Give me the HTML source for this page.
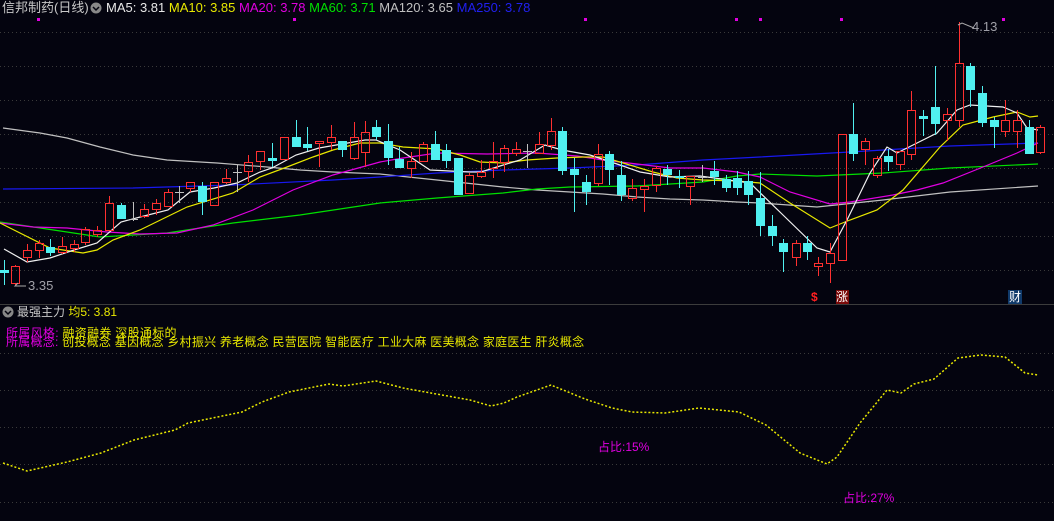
<!DOCTYPE html>
<html><head><meta charset="utf-8">
<style>
html,body{margin:0;padding:0;background:#04040f;width:1054px;height:521px;overflow:hidden;font-family:"Liberation Sans","Noto Sans CJK SC",sans-serif;}
#w{position:relative;width:1054px;height:521px;}
svg{position:absolute;left:0;top:0;}
.t{position:absolute;white-space:nowrap;font-size:12px;line-height:14px;}
</style></head><body><div id="w">
<svg id="s" width="1054" height="521" xmlns="http://www.w3.org/2000/svg">
<g stroke="#3a3a3a" stroke-dasharray="1,3" stroke-width="1">
<line x1="0" y1="32.5" x2="1054" y2="32.5"/><line x1="0" y1="66.5" x2="1054" y2="66.5"/><line x1="0" y1="100.5" x2="1054" y2="100.5"/><line x1="0" y1="134.5" x2="1054" y2="134.5"/><line x1="0" y1="168.5" x2="1054" y2="168.5"/><line x1="0" y1="202.5" x2="1054" y2="202.5"/><line x1="0" y1="236.5" x2="1054" y2="236.5"/><line x1="0" y1="270.5" x2="1054" y2="270.5"/>
<line x1="0" y1="353.5" x2="1054" y2="353.5"/><line x1="0" y1="390.5" x2="1054" y2="390.5"/><line x1="0" y1="427.5" x2="1054" y2="427.5"/><line x1="0" y1="464.5" x2="1054" y2="464.5"/><line x1="0" y1="502.5" x2="1054" y2="502.5"/>
</g>
<line x1="0" y1="304.5" x2="1054" y2="304.5" stroke="#3c3c3c"/>
<g fill="#e000e0"><rect x="37" y="18" width="3" height="3"/><rect x="293" y="18" width="3" height="3"/><rect x="584" y="18" width="3" height="3"/><rect x="735" y="18" width="3" height="3"/><rect x="759" y="18" width="3" height="3"/><rect x="840" y="18" width="3" height="3"/><rect x="1002" y="18" width="3" height="3"/></g>
<g id="ma" fill="none" stroke-width="1.2"></g>
<g id="cd"></g>
<polyline fill="none" stroke="#e8e800" stroke-width="1.5" stroke-dasharray="2,2" points="3,463 27,471 67,462 101,453 134,440 175,430 188,423 242,412 262,402 289,392 329,384 343,386 376,381 403,388 470,400 491,406 504,403 517,397 551,385 585,399 612,408 632,412 665,413 699,408 739,412 766,425 800,453 827,464 837,457 860,423 887,390 901,393 914,384 934,379 958,358 981,355 1005,357 1025,373 1038,375"/>
<polyline fill="none" stroke="#aaa" points="974,28 962,23 958,25"/>
<polyline fill="none" stroke="#aaa" points="26,286 15,286 18,283"/>
<circle cx="96" cy="8" r="5.5" fill="#888"/><polyline points="93,7 96,10 99,7" fill="none" stroke="#04040f" stroke-width="1.5"/>
<circle cx="8" cy="312" r="5.5" fill="#888"/><polyline points="5,311 8,314 11,311" fill="none" stroke="#04040f" stroke-width="1.5"/>
<rect x="836" y="290" width="13" height="14" fill="#7a0a0a"/>
<rect x="1008" y="290" width="14" height="14" fill="#103a6a"/>
</svg>
<div class="t" style="left:2px;top:1px;color:#c8c8c8;font-size:13px">信邦制药(日线)</div>
<div class="t" style="left:106px;top:1px;font-size:13px"><span style="color:#e8e8e8">MA5: 3.81</span> <span style="color:#e8e800">MA10: 3.85</span> <span style="color:#e000e0">MA20: 3.78</span> <span style="color:#00e000">MA60: 3.71</span> <span style="color:#c0c0c0">MA120: 3.65</span> <span style="color:#2020f0">MA250: 3.78</span></div>
<div class="t" style="left:972px;top:20px;color:#a0a0a8;font-size:13px">4.13</div>
<div class="t" style="left:28px;top:279px;color:#a0a0a8;font-size:13px">3.35</div>
<div class="t" style="left:811px;top:290px;color:#ff2020;font-weight:bold">$</div>
<div class="t" style="left:836px;top:290px;color:#fff">涨</div>
<div class="t" style="left:1009px;top:290px;color:#fff">财</div>
<div class="t" style="left:17px;top:305px;color:#c8c8c8">最强主力 <span style="color:#e8e800">均5: 3.81</span></div>
<div class="t" style="left:6px;top:326px;color:#e000e0;letter-spacing:0.3px">所属风格: <span style="color:#e8e800">融资融券 深股通标的</span></div>
<div class="t" style="left:6px;top:335px;color:#e000e0;letter-spacing:0.25px">所属概念: <span style="color:#e8e800">创投概念 基因概念 乡村振兴 养老概念 民营医院 智能医疗 工业大麻 医美概念 家庭医生 肝炎概念</span></div>
<div class="t" style="left:598px;top:440px;color:#e000e0">占比:15%</div>
<div class="t" style="left:843px;top:491px;color:#e000e0">占比:27%</div>
</div>
<script>
var C=[[4,'c',270,273,260,285],[15,'r',266,283,265,285],[27,'r',250,257,244,262],[39,'r',243,250,240,258],[50,'c',247,253,239,256],[62,'r',246,252,237,254],[74,'r',244,248,240,252],[85,'r',229,242,227,245],[97,'r',230,234,226,237],[109,'r',203,230,196,230],[121,'c',205,219,203,219],[133,'g',219,219,202,221],[144,'r',209,216,204,218],[156,'r',203,209,199,215],[168,'r',192,206,189,207],[179,'g',192,192,186,203],[190,'r',182,188,182,192],[202,'c',186,202,182,215],[214,'r',182,205,182,205],[226,'r',178,182,169,184],[237,'g',172,172,165,192],[248,'r',162,171,155,182],[260,'r',151,161,151,170],[272,'c',158,161,143,167],[284,'r',137,159,137,160],[296,'c',137,147,120,147],[307,'c',144,148,127,151],[319,'r',141,143,141,167],[331,'r',137,142,125,150],[342,'c',141,150,141,157],[354,'r',137,158,122,160],[365,'r',132,152,121,167],[376,'c',127,137,120,140],[388,'c',141,158,124,165],[399,'c',159,168,147,168],[411,'r',161,168,152,178],[423,'r',144,161,142,162],[435,'c',144,160,131,158],[446,'c',150,161,144,168],[458,'c',158,195,158,195],[469,'r',175,193,173,193],[481,'r',172,176,160,178],[493,'r',161,168,142,178],[504,'r',148,162,145,172],[516,'r',149,153,142,156],[527,'g',151,151,144,168],[539,'r',144,153,132,154],[551,'r',131,145,118,150],[562,'c',131,171,127,175],[574,'c',169,175,158,212],[586,'c',182,192,175,205],[598,'r',154,183,144,186],[609,'c',154,170,151,185],[621,'c',175,195,161,201],[632,'r',188,198,179,201],[644,'r',186,189,179,212],[656,'r',168,185,166,192],[667,'c',169,175,165,185],[679,'c',176,178,170,188],[690,'r',176,186,176,205],[702,'g',177,177,165,182],[714,'c',171,177,161,185],[726,'c',179,188,175,192],[737,'c',178,188,171,195],[748,'c',181,195,171,205],[760,'c',198,226,172,236],[772,'c',226,236,215,246],[783,'c',243,252,239,272],[796,'r',243,257,240,266],[807,'c',243,252,236,260],[818,'r',263,266,257,276],[830,'r',253,263,243,283],[842,'r',134,260,134,260],[853,'c',134,154,103,161],[865,'r',141,149,138,165],[877,'r',158,175,156,178],[888,'c',156,162,149,171],[900,'r',151,164,151,170],[911,'r',110,154,91,160],[923,'c',116,119,110,136],[935,'c',107,124,66,135],[947,'r',114,120,108,141],[959,'r',63,120,22,127],[970,'c',66,90,63,107],[982,'c',93,123,86,127],[994,'c',120,127,117,148],[1005,'r',120,131,100,137],[1017,'r',120,131,110,148],[1029,'c',127,154,120,154],[1040,'r',127,152,125,154]];
var h='';C.forEach(function(d){var x=d[0],t=d[1],a=d[2],b=d[3],hi=d[4],lo=d[5];
var col=t=='r'?'#ff3030':t=='c'?'#50f0f0':'#c0c0c0';
if(t=='r'){h+='<line x1="'+(x+.5)+'" y1="'+hi+'" x2="'+(x+.5)+'" y2="'+a+'" stroke="'+col+'"/><line x1="'+(x+.5)+'" y1="'+b+'" x2="'+(x+.5)+'" y2="'+lo+'" stroke="'+col+'"/><rect x="'+(x-3.5)+'" y="'+(a+.5)+'" width="8" height="'+Math.max(b-a,1)+'" fill="none" stroke="'+col+'"/>';}
else{h+='<line x1="'+(x+.5)+'" y1="'+hi+'" x2="'+(x+.5)+'" y2="'+lo+'" stroke="'+col+'"/><rect x="'+(x-4)+'" y="'+a+'" width="9" height="'+Math.max(b-a,1)+'" fill="'+col+'"/>';}});
document.getElementById('cd').innerHTML=h;
var M=[['#c0c0c0','3,128 40,133 67,138 100,147 133,155 167,160 217,163 267,167 300,170 333,172 380,174 437,180 503,187 537,190 570,192 603,194 637,197 670,199 703,200 737,202 760,203 817,207 883,200 950,192 1038,186'],
['#1818f0','3,189 133,188 233,185 333,180 380,177 437,173 503,170 570,168 637,165 703,160 760,157 850,152 950,146 1038,143'],
['#00e000','0,222 67,232 100,237 167,233 233,223 300,215 380,203 437,198 503,193 537,189 570,187 637,186 703,182 737,176 760,174 817,176 883,173 950,168 1038,164'],
['#e000e0','0,223 33,227 67,228 107,232 140,234 177,233 213,225 253,210 293,190 333,175 380,162 403,158 437,153 487,154 537,153 577,156 603,160 637,164 670,168 703,168 737,172 760,177 790,192 830,204 850,202 893,195 917,190 943,183 983,167 1017,153 1038,143'],
['#e8e800','0,223 50,248 83,253 97,250 113,240 140,230 187,207 233,193 260,177 287,167 313,157 333,150 360,143 380,143 403,147 437,149 460,155 480,162 503,163 527,160 557,158 583,157 603,157 623,163 653,172 677,178 703,180 737,181 760,183 790,203 830,228 850,220 877,210 903,190 940,147 963,125 993,117 1017,112 1030,117 1038,116'],
['#f0f0f0','4,249 27,262 50,258 74,250 97,243 121,222 144,216 168,210 190,192 214,188 237,183 260,172 272,168 296,155 319,148 342,144 365,140 376,140 400,150 430,170 470,172 481,172 500,166 520,160 545,145 562,150 590,155 620,165 640,172 670,177 700,176 750,183 783,215 817,248 830,252 847,220 870,173 887,147 897,153 913,145 937,133 957,110 970,105 1003,107 1017,113 1027,128 1038,130']];
var g='';M.forEach(function(m){g+='<polyline points="'+m[1]+'" stroke="'+m[0]+'"/>';});
document.getElementById('ma').innerHTML=g;
</script>
</body></html>
